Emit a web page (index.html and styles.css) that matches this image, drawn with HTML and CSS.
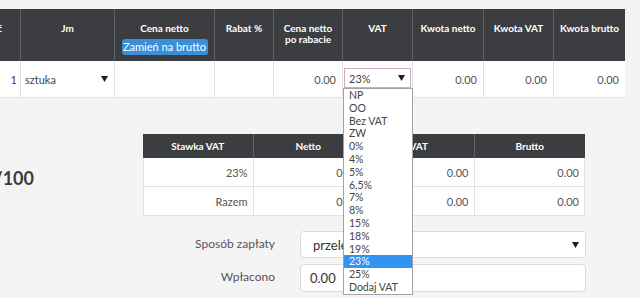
FILE: index.html
```html
<!DOCTYPE html>
<html lang="pl">
<head>
<meta charset="utf-8">
<title>Faktura</title>
<link rel="stylesheet" href="styles.css">
</head>
<body>
<div class="page">
  <div class="items">
    <div class="h h-first"><span>Ilość</span></div>
    <div class="h">Jm</div>
    <div class="h">Cena netto<div class="btn">Zamień na brutto</div></div>
    <div class="h">Rabat %</div>
    <div class="h">Cena netto po rabacie</div>
    <div class="h">VAT</div>
    <div class="h">Kwota netto</div>
    <div class="h">Kwota VAT</div>
    <div class="h h-last">Kwota brutto</div>

    <div class="c c-qty">1</div>
    <div class="c c-unit"><span>sztuka</span><svg class="arrow" viewBox="0 0 7 6" width="7" height="6"><polygon points="0,0 7,0 3.5,6"/></svg></div>
    <div class="c"></div>
    <div class="c"></div>
    <div class="c">0.00</div>
    <div class="c c-vat">
      <div class="vat-select"><span>23%</span><svg class="arrow" viewBox="0 0 7 6" width="7" height="6"><polygon points="0,0 7,0 3.5,6"/></svg>
        <ul class="dropdown">
          <li>NP</li>
          <li>OO</li>
          <li>Bez VAT</li>
          <li>ZW</li>
          <li>0%</li>
          <li>4%</li>
          <li>5%</li>
          <li>6,5%</li>
          <li>7%</li>
          <li>8%</li>
          <li>15%</li>
          <li>18%</li>
          <li>19%</li>
          <li class="sel">23%</li>
          <li>25%</li>
          <li>Dodaj VAT</li>
        </ul>
      </div>
    </div>
    <div class="c">0.00</div>
    <div class="c">0.00</div>
    <div class="c c-last">0.00</div>
  </div>

  <div class="summary-row">
    <div class="doc-no"><span>2017/100</span></div>
    <div class="summary">
      <div class="sh">Stawka VAT</div>
      <div class="sh">Netto</div>
      <div class="sh">VAT</div>
      <div class="sh">Brutto</div>
      <div class="sc">23%</div>
      <div class="sc">0.00</div>
      <div class="sc">0.00</div>
      <div class="sc">0.00</div>
      <div class="sc">Razem</div>
      <div class="sc">0.00</div>
      <div class="sc">0.00</div>
      <div class="sc">0.00</div>
    </div>
  </div>

  <div class="form">
    <div class="label">Sposób zapłaty</div>
    <div class="field field-select"><span>przelew</span><svg class="arrow" viewBox="0 0 7 6" width="7" height="6"><polygon points="0,0 7,0 3.5,6"/></svg></div>
    <div class="label">Wpłacono</div>
    <div class="field field-input">0.00</div>
    <div class="label"></div>
    <div class="field field-input"></div>
  </div>
</div>
</body>
</html>
```

FILE: styles.css
```css
html, body {
  margin: 0;
  padding: 0;
}
body {
  background: #f4f4f4;
  font-family: Lato, "Open Sans", "Liberation Sans", sans-serif;
  color: #555;
  overflow: hidden;
  width: 640px;
  height: 298px;
}
.page {
  padding-top: 9px;
}
.items {
  display: grid;
  grid-template-columns: 21px 94px 100px 59px 69px 70px 71px 70px 71px;
  width: 625px;
}
.h {
  box-sizing: border-box;
  height: 52px;
  background: #3c3d40;
  color: #fff;
  font-weight: 700;
  font-size: 10px;
  line-height: 11px;
  text-align: center;
  padding: 14px 4px 0;
  border-right: 1px solid #606164;
}
.h-first {
  display: flex;
  justify-content: flex-end;
  overflow: hidden;
  white-space: nowrap;
  padding: 14px 18px 0 0;
}
.h-last {
  border-right: none;
}
.btn {
  display: block;
  margin: 5px auto 0;
  width: 86px;
  height: 16px;
  line-height: 16px;
  background: #3b8fd8;
  border-radius: 3px;
  font-weight: 400;
  font-size: 11px;
  color: #fff;
}
.c {
  box-sizing: border-box;
  height: 37px;
  background: #fff;
  border-right: 1px solid #e2e2e2;
  border-bottom: 1px solid #e2e2e2;
  display: flex;
  align-items: center;
  justify-content: flex-end;
  padding-right: 6px;
  font-size: 11px;
  color: #555;
}
.c-last {
  border-right: none;
}
.c-qty {
  padding-right: 3px;
  color: #444;
}
.c-unit {
  justify-content: space-between;
  padding: 0 6px 0 4px;
  color: #444;
}
.arrow {
  fill: #1e1e1e;
  display: block;
}
.c-vat {
  align-items: flex-start;
  justify-content: stretch;
  padding: 7px 1px 0 1px;
}
.vat-select {
  position: relative;
  box-sizing: border-box;
  width: 68px;
  height: 20px;
  border: 1px solid #d4a9c7;
  background: #fff;
  display: flex;
  align-items: center;
  justify-content: space-between;
  padding: 0 5px 0 4px;
  font-size: 11px;
  color: #444;
}
.dropdown {
  position: absolute;
  top: 19px;
  left: -2px;
  width: 70px;
  box-sizing: border-box;
  margin: 0;
  padding: 0;
  list-style: none;
  background: #fff;
  border: 1px solid #a3a3a3;
  z-index: 5;
}
.dropdown li {
  height: 12.8px;
  line-height: 12.8px;
  padding-left: 5px;
  font-size: 10.5px;
  color: #444;
  white-space: nowrap;
}
.dropdown li.sel {
  background: #3193f2;
  color: #fff;
}
.summary-row {
  display: flex;
  margin-top: 36px;
}
.doc-no {
  width: 143px;
  box-sizing: border-box;
  padding: 6px 109px 0 0;
  display: flex;
  align-items: center;
  justify-content: flex-end;
  overflow: hidden;
  white-space: nowrap;
  font-size: 18px;
  font-weight: 700;
  color: #3a3a3a;
}
.summary {
  display: grid;
  grid-template-columns: repeat(4, 1fr);
  width: 442px;
}
.sh {
  height: 24px;
  line-height: 24px;
  background: #3c3d40;
  color: #fff;
  font-weight: 700;
  font-size: 10px;
  text-align: center;
  border-right: 1px solid #606164;
}
.sh:nth-child(4) {
  border-right: none;
}
.sc {
  box-sizing: border-box;
  height: 29px;
  background: #fff;
  border-right: 1px solid #e2e2e2;
  border-bottom: 1px solid #e2e2e2;
  display: flex;
  align-items: center;
  justify-content: flex-end;
  padding-right: 5px;
  font-size: 11px;
  color: #555;
}
.sc:nth-child(4n+1) {
  border-left: 1px solid #e2e2e2;
}
.form {
  display: grid;
  grid-template-columns: 275px 286px;
  column-gap: 25px;
  row-gap: 6px;
  margin-top: 15px;
}
.label {
  text-align: right;
  align-self: center;
  font-size: 12px;
  color: #555;
  padding-bottom: 3px;
}
.field {
  box-sizing: border-box;
  background: #fff;
  border: 1px solid #dadada;
  border-radius: 4px;
  display: flex;
  align-items: center;
  font-size: 13px;
  color: #333;
}
.field-select {
  height: 27px;
  justify-content: space-between;
  padding: 0 6px 0 12px;
}
.field-input {
  height: 28px;
  padding-left: 9px;
}
```
